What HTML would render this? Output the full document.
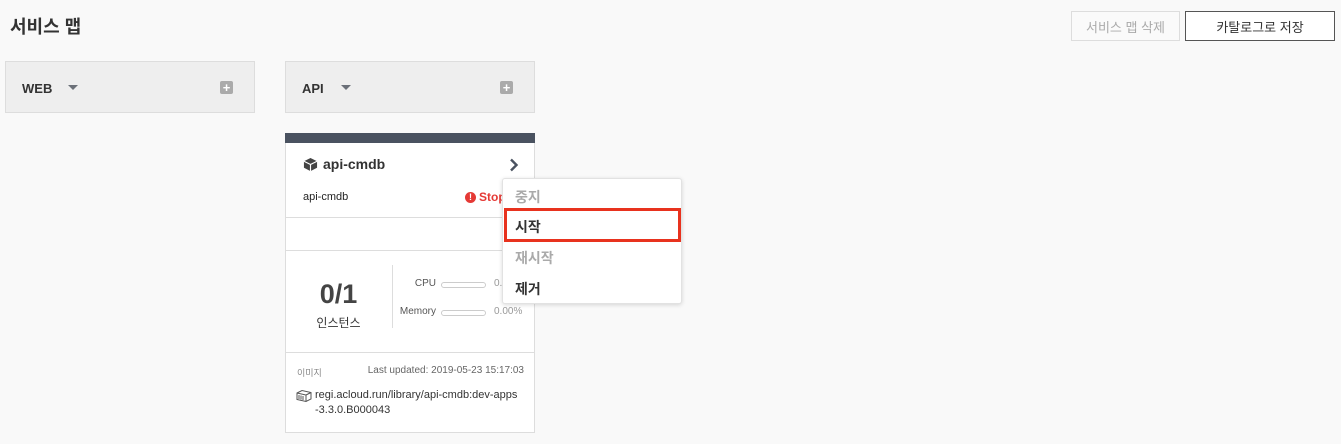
<!DOCTYPE html>
<html><head><meta charset="utf-8"><style>
*{box-sizing:border-box;margin:0;padding:0}
body{width:1341px;height:444px;background:#f9f9f9;font-family:"Liberation Sans","Noto Sans CJK KR",sans-serif;color:#333;position:relative;overflow:hidden}
.a{position:absolute}
.btn{position:absolute;top:11px;height:30px;border:1px solid #ccc;background:#fafafa;font-size:13px;display:flex;align-items:center;justify-content:center}
.col{position:absolute;top:61px;height:52px;width:250px;background:#eee;border:1px solid #ddd;font-size:13px;font-weight:bold}
.col .t{position:absolute;left:16px;top:19px}
.col .tri{position:absolute;top:23px;width:0;height:0;border-left:5px solid transparent;border-right:5px solid transparent;border-top:5px solid #6b7078}
.col .plus{position:absolute;right:21px;top:19px;width:13px;height:13px;background:#aaa;border-radius:2px;color:#fff;font-size:13px;line-height:13px;text-align:center}
.card{position:absolute;left:285px;top:133px;width:250px;height:300px;background:#fff;border:1px solid #ddd}
.hr{position:absolute;left:0;width:248px;height:1px;background:#ddd}
.menu{position:absolute;left:502px;top:178px;width:180px;height:126px;background:#fff;border:1px solid #e2e2e2;border-radius:3px;box-shadow:0 1px 4px rgba(0,0,0,.15);font-size:14px;font-weight:bold}
.menu div{position:absolute;left:12px}
.bar{position:absolute;width:45px;height:6px;border:1px solid #ccc;border-radius:3px}
</style></head><body>
<div class="a" style="left:10px;top:13px;font-size:18px;font-weight:bold;color:#333">서비스 맵</div>
<div class="btn" style="left:1071px;width:109px;color:#aaa;border-color:#ddd">서비스 맵 삭제</div>
<div class="btn" style="left:1185px;width:150px;color:#333;border-color:#555;background:#fff">카탈로그로 저장</div>

<div class="col" style="left:5px"><span class="t">WEB</span><span class="tri" style="left:62px"></span><span class="plus">+</span></div>
<div class="col" style="left:285px"><span class="t">API</span><span class="tri" style="left:55px"></span><span class="plus">+</span></div>

<div class="card">
 <div class="a" style="left:-1px;top:-1px;width:250px;height:10px;background:#4a5260"></div>
 <svg class="a" style="left:17px;top:23px" width="15" height="15" viewBox="0 0 16 16"><path d="M8 1L15 4.5V11.5L8 15L1 11.5V4.5Z" fill="#444"/><path d="M1 4.5L8 8L15 4.5M8 8V15" stroke="#fff" stroke-width="1.2" fill="none"/></svg>
 <div class="a" style="left:37px;top:22px;font-size:14px;font-weight:bold;color:#333">api-cmdb</div>
 <svg class="a" style="left:223px;top:24px" width="10" height="14" viewBox="0 0 10 14"><path d="M2 1.5L7.5 7L2 12.5" stroke="#4a5260" stroke-width="2.4" fill="none"/></svg>
 <div class="a" style="left:17px;top:57px;font-size:11px;color:#222">api-cmdb</div>
 <div class="a" style="left:179px;top:58px;width:11px;height:11px;border-radius:50%;background:#e53935;color:#fff;font-size:9px;line-height:11px;text-align:center;font-weight:bold">!</div>
 <div class="a" style="left:193px;top:56px;font-size:12px;font-weight:bold;color:#e53935">Stop</div>
 <div class="hr" style="top:83px"></div>
 <div class="hr" style="top:116px"></div>
 <div class="a" style="left:0;width:105px;text-align:center;top:145px;font-size:27px;font-weight:bold;color:#444">0/1</div>
 <div class="a" style="left:0;width:105px;text-align:center;top:180px;font-size:12px;color:#333">인스턴스</div>
 <div class="a" style="left:106px;top:131px;width:1px;height:63px;background:#ddd"></div>
 <div class="a" style="left:100px;width:50px;text-align:right;top:144px;font-size:10px;color:#555">CPU</div>
 <div class="bar" style="left:155px;top:148px"></div>
 <div class="a" style="left:208px;top:144px;font-size:10px;color:#999">0.00%</div>
 <div class="a" style="left:90px;width:60px;text-align:right;top:172px;font-size:10px;color:#555">Memory</div>
 <div class="bar" style="left:155px;top:176px"></div>
 <div class="a" style="left:208px;top:172px;font-size:10px;color:#999">0.00%</div>
 <div class="hr" style="top:218px"></div>
 <div class="a" style="left:11px;top:232px;font-size:9px;color:#888">이미지</div>
 <div class="a" style="right:10px;top:231px;font-size:10px;color:#666">Last updated: 2019-05-23 15:17:03</div>
 <svg class="a" style="left:10px;top:255px" width="16" height="14" viewBox="0 0 16 14"><path d="M1 4L6 1.5L15 3.5V10L10 12.5L1 10.5Z M1 4L10 6V12.5 M10 6L15 3.5" stroke="#555" fill="none"/><path d="M3 6V10M5 6.5V10.5M7 7V11" stroke="#555"/></svg>
 <div class="a" style="left:29px;top:254px;font-size:11px;line-height:15px;color:#333;width:215px">regi.acloud.run/library/api-cmdb:dev-apps<br>-3.3.0.B000043</div>
</div>

<div class="menu">
 <div style="top:8px;color:#aaa">중지</div>
 <div style="left:1px;top:29px;width:177px;height:34px;border:3px solid #e8321e"></div>
 <div style="top:38px;color:#333">시작</div>
 <div style="top:69px;color:#aaa">재시작</div>
 <div style="top:100px;color:#333">제거</div>
</div>
</body></html>
